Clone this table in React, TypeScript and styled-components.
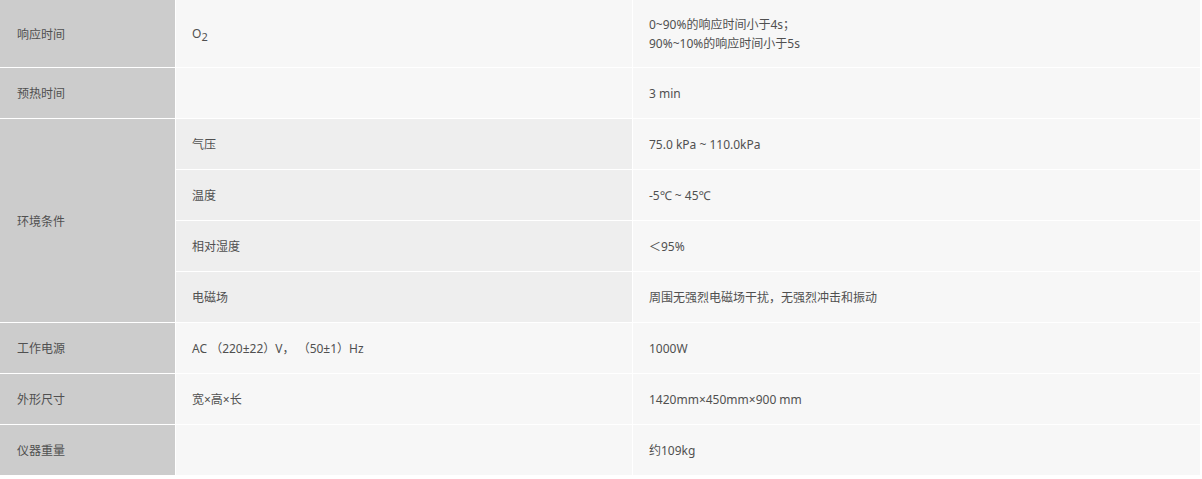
import React from 'react'
import styled, { createGlobalStyle } from 'styled-components'

const GlobalStyle = createGlobalStyle`
  body {
    margin: 0;
    background: #fff;
    font-family: "Noto Sans", "Noto Sans CJK SC", sans-serif;
  }
`

const STable = styled.div`
  display: grid;
  grid-template-columns: 175px 456px 567px;
  grid-template-rows: 67px repeat(8, 50px);
  gap: 1px;
  width: 1200px;
  background: #fff;
  font-size: 12px;
  color: #505050;
  text-spacing-trim: space-all;
`

const SLabel = styled.div<{ $span?: number }>`
  display: flex;
  align-items: center;
  padding: 0 16px 0 17px;
  background: #cccccc;
  grid-row: ${(p) => (p.$span ? `span ${p.$span}` : 'auto')};
`

const SCell = styled.div<{ $shade?: boolean }>`
  display: flex;
  align-items: center;
  padding: 0 16px;
  background: ${(p) => (p.$shade ? '#eeeeee' : '#f7f7f7')};
  line-height: 19px;
  white-space: pre;
`

const SLines = styled.div`
  display: flex;
  flex-direction: column;
`

const SSub = styled.sub`
  font-size: 11px;
  vertical-align: -3px;
  line-height: 0;
`

interface IRow {
  label: string
  name: React.ReactNode
  value: React.ReactNode
}

const rows: IRow[] = [
  { label: '工作电源', name: 'AC （220±22）V， （50±1）Hz', value: '1000W' },
  { label: '外形尺寸', name: '宽×高×长', value: '1420mm×450mm×900 mm' },
  { label: '仪器重量', name: '', value: '约109kg' },
]

const envRows = [
  ['气压', '75.0 kPa ~ 110.0kPa'],
  ['温度', '-5℃ ~ 45℃'],
  ['相对湿度', '＜95%'],
  ['电磁场', '周围无强烈电磁场干扰，无强烈冲击和振动'],
]

const App = () => {
  return (
    <>
      <GlobalStyle />
      <STable>
        <SLabel>响应时间</SLabel>
        <SCell>
          <span>
            O<SSub>2</SSub>
          </span>
        </SCell>
        <SCell>
          <SLines>
            <span>0~90%的响应时间小于4s；</span>
            <span>90%~10%的响应时间小于5s</span>
          </SLines>
        </SCell>

        <SLabel>预热时间</SLabel>
        <SCell />
        <SCell>3 min</SCell>

        <SLabel $span={4}>环境条件</SLabel>
        {envRows.map(([name, value]) => (
          <React.Fragment key={name}>
            <SCell $shade>{name}</SCell>
            <SCell>{value}</SCell>
          </React.Fragment>
        ))}

        {rows.map((r) => (
          <React.Fragment key={r.label}>
            <SLabel>{r.label}</SLabel>
            <SCell>{r.name}</SCell>
            <SCell>{r.value}</SCell>
          </React.Fragment>
        ))}
      </STable>
    </>
  )
}

export default App
